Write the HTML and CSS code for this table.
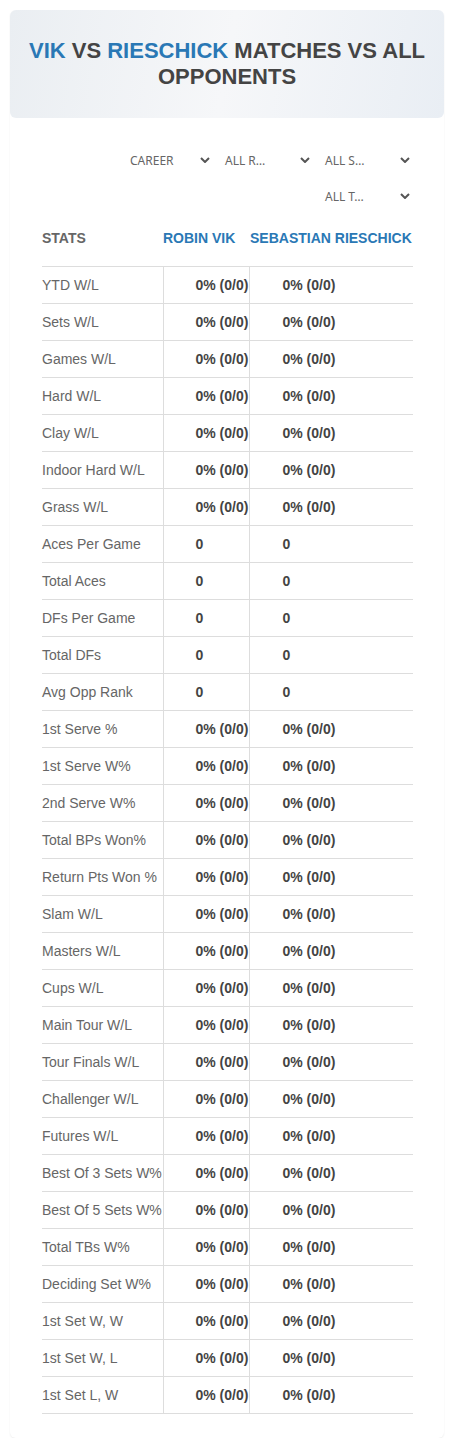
FILE: index.html
```html
<!DOCTYPE html>
<html>
<head>
<meta charset="utf-8">
<link rel="stylesheet" href="styles.css">
</head>
<body>
<div class="card">
  <div class="hero">
    <h1><span class="blue">VIK</span> VS <span class="blue">RIESCHICK</span> MATCHES VS ALL OPPONENTS</h1>
  </div>
  <div class="content">
    <div class="filters">
      <div class="sel sel-first"><span>CAREER</span><svg viewBox="0 0 10 6"><path d="M1 1l4 4 4-4"/></svg></div>
      <div class="sel"><span>ALL R…</span><svg viewBox="0 0 10 6"><path d="M1 1l4 4 4-4"/></svg></div>
      <div class="sel"><span>ALL S…</span><svg viewBox="0 0 10 6"><path d="M1 1l4 4 4-4"/></svg></div>
      <div class="sel"><span>ALL T…</span><svg viewBox="0 0 10 6"><path d="M1 1l4 4 4-4"/></svg></div>
    </div>
    <table class="stats">
      <thead>
        <tr><th class="c1">STATS</th><th class="c2">ROBIN VIK</th><th class="c3">SEBASTIAN RIESCHICK</th></tr>
      </thead>
      <tbody>
        <tr><td class="c1">YTD W/L</td><td class="c2">0% (0/0)</td><td class="c3">0% (0/0)</td></tr>
        <tr><td class="c1">Sets W/L</td><td class="c2">0% (0/0)</td><td class="c3">0% (0/0)</td></tr>
        <tr><td class="c1">Games W/L</td><td class="c2">0% (0/0)</td><td class="c3">0% (0/0)</td></tr>
        <tr><td class="c1">Hard W/L</td><td class="c2">0% (0/0)</td><td class="c3">0% (0/0)</td></tr>
        <tr><td class="c1">Clay W/L</td><td class="c2">0% (0/0)</td><td class="c3">0% (0/0)</td></tr>
        <tr><td class="c1">Indoor Hard W/L</td><td class="c2">0% (0/0)</td><td class="c3">0% (0/0)</td></tr>
        <tr><td class="c1">Grass W/L</td><td class="c2">0% (0/0)</td><td class="c3">0% (0/0)</td></tr>
        <tr><td class="c1">Aces Per Game</td><td class="c2">0</td><td class="c3">0</td></tr>
        <tr><td class="c1">Total Aces</td><td class="c2">0</td><td class="c3">0</td></tr>
        <tr><td class="c1">DFs Per Game</td><td class="c2">0</td><td class="c3">0</td></tr>
        <tr><td class="c1">Total DFs</td><td class="c2">0</td><td class="c3">0</td></tr>
        <tr><td class="c1">Avg Opp Rank</td><td class="c2">0</td><td class="c3">0</td></tr>
        <tr><td class="c1">1st Serve %</td><td class="c2">0% (0/0)</td><td class="c3">0% (0/0)</td></tr>
        <tr><td class="c1">1st Serve W%</td><td class="c2">0% (0/0)</td><td class="c3">0% (0/0)</td></tr>
        <tr><td class="c1">2nd Serve W%</td><td class="c2">0% (0/0)</td><td class="c3">0% (0/0)</td></tr>
        <tr><td class="c1">Total BPs Won%</td><td class="c2">0% (0/0)</td><td class="c3">0% (0/0)</td></tr>
        <tr><td class="c1">Return Pts Won %</td><td class="c2">0% (0/0)</td><td class="c3">0% (0/0)</td></tr>
        <tr><td class="c1">Slam W/L</td><td class="c2">0% (0/0)</td><td class="c3">0% (0/0)</td></tr>
        <tr><td class="c1">Masters W/L</td><td class="c2">0% (0/0)</td><td class="c3">0% (0/0)</td></tr>
        <tr><td class="c1">Cups W/L</td><td class="c2">0% (0/0)</td><td class="c3">0% (0/0)</td></tr>
        <tr><td class="c1">Main Tour W/L</td><td class="c2">0% (0/0)</td><td class="c3">0% (0/0)</td></tr>
        <tr><td class="c1">Tour Finals W/L</td><td class="c2">0% (0/0)</td><td class="c3">0% (0/0)</td></tr>
        <tr><td class="c1">Challenger W/L</td><td class="c2">0% (0/0)</td><td class="c3">0% (0/0)</td></tr>
        <tr><td class="c1">Futures W/L</td><td class="c2">0% (0/0)</td><td class="c3">0% (0/0)</td></tr>
        <tr><td class="c1">Best Of 3 Sets W%</td><td class="c2">0% (0/0)</td><td class="c3">0% (0/0)</td></tr>
        <tr><td class="c1">Best Of 5 Sets W%</td><td class="c2">0% (0/0)</td><td class="c3">0% (0/0)</td></tr>
        <tr><td class="c1">Total TBs W%</td><td class="c2">0% (0/0)</td><td class="c3">0% (0/0)</td></tr>
        <tr><td class="c1">Deciding Set W%</td><td class="c2">0% (0/0)</td><td class="c3">0% (0/0)</td></tr>
        <tr><td class="c1">1st Set W, W</td><td class="c2">0% (0/0)</td><td class="c3">0% (0/0)</td></tr>
        <tr><td class="c1">1st Set W, L</td><td class="c2">0% (0/0)</td><td class="c3">0% (0/0)</td></tr>
        <tr><td class="c1">1st Set L, W</td><td class="c2">0% (0/0)</td><td class="c3">0% (0/0)</td></tr>
      </tbody>
    </table>
  </div>
</div>
</body>
</html>
```

FILE: styles.css
```css
* { box-sizing: border-box; }
body {
  margin: 0;
  padding: 10px 11px 0 10px;
  background: #fff;
  font-family: "Liberation Sans", Arial, sans-serif;
  color: #444;
}
.card {
  border-radius: 6px;
  background: #fff;
  box-shadow: 0 1px 2px rgba(0, 0, 0, 0.07);
  padding-bottom: 24px;
}
.hero {
  height: 108px;
  border-radius: 6px;
  background: linear-gradient(100deg, #eaeef2 0%, #f6f7f9 50%, #e9eef4 100%);
  display: flex;
  align-items: center;
  justify-content: center;
  padding: 0 8px;
}
.hero h1 {
  margin: 0;
  font-size: 22px;
  line-height: 26px;
  font-weight: bold;
  text-align: center;
  color: #444;
}
.blue { color: #2a78b5; }
.content {
  padding: 0 31px 0 32px;
}
.filters {
  display: flex;
  flex-wrap: wrap;
  justify-content: flex-end;
  gap: 0 10px;
  padding: 24px 0 0 0;
}
.sel {
  width: 90px;
  height: 36px;
  display: flex;
  align-items: center;
  justify-content: space-between;
  padding: 0 3px 0 2px;
  font-family: "Noto Sans", "Open Sans", sans-serif;
  font-size: 12px;
  color: #666;
}
.sel-first { width: 85px; }
.sel svg {
  width: 10px;
  height: 6px;
  fill: none;
  stroke: #555;
  stroke-width: 2;
}
.stats {
  width: 100%;
  border-collapse: collapse;
  margin-top: 6px;
  font-size: 14px;
}
.stats th {
  height: 46px;
  text-align: left;
  font-weight: bold;
  padding: 0 0 10px 0;
  border-bottom: 1px solid #ddd;
  white-space: nowrap;
}
.stats th.c1 { color: #666; }
.stats th.c2, .stats th.c3 { color: #2a78b5; }
.stats th.c3 { padding-left: 1px; }
.stats td {
  height: 37px;
  padding: 0;
  border-bottom: 1px solid #ddd;
  white-space: nowrap;
}
.c1 { width: 121px; }
.c2 { width: 86px; }
.stats td.c1 { color: #666; }
.stats td.c2, .stats td.c3 {
  border-left: 1px solid #ddd;
  font-weight: bold;
  color: #444;
  padding-left: 32px;
}
.stats td.c3 { padding-left: 33px; }
```
